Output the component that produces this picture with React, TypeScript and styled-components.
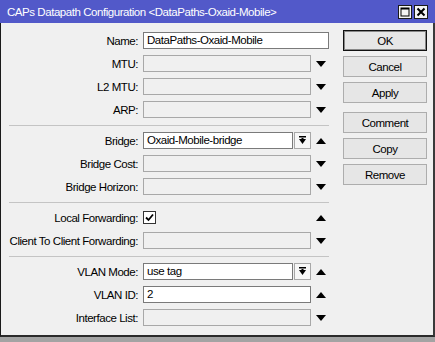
import * as React from 'react'
import styled, { createGlobalStyle } from 'styled-components'

const GlobalStyle = createGlobalStyle`
  html, body {
    margin: 0;
    padding: 0;
    background: #a3a3a3;
  }
  body {
    font-family: "Liberation Sans", Arial, sans-serif;
    font-size: 11.5px;
    letter-spacing: -0.45px;
    color: #000;
  }
`

const Screen = styled.div`
  width: 435px;
  height: 342px;
  overflow: hidden;
  background: #a3a3a3;
`

const Window = styled.div`
  width: 435px;
  height: 337px;
  box-sizing: border-box;
  background: #f0f0f0;
  border-left: 1px solid #1a1a1a;
  border-right: 2px solid #3a3a3a;
  border-bottom: 2px solid #2a2a2a;
  display: flex;
  flex-direction: column;
`

const TitleBar = styled.div`
  height: 23px;
  margin-left: -1px;
  margin-right: -2px;
  background: #5259c9;
  color: #fff;
  display: flex;
  align-items: center;
  justify-content: space-between;
  padding: 0 7px 0 7px;
`

const Title = styled.span`
  font-size: 11.5px;
  white-space: nowrap;
`

const TitleButtons = styled.div`
  display: flex;
  gap: 2px;
`

const TitleButton = styled.div`
  width: 14px;
  height: 14px;
  box-sizing: border-box;
  background: #f4f4f4;
  border: 1px solid #1a1a1a;
  display: flex;
  align-items: center;
  justify-content: center;
`

const Body = styled.div`
  display: flex;
  padding-top: 6px;
`

const Form = styled.div`
  width: 342px;
  display: flex;
  flex-direction: column;
`

const Row = styled.div`
  display: grid;
  grid-template-columns: 142px 168px 20px;
  height: 23px;
  align-items: center;
`

const Label = styled.label`
  text-align: right;
  padding-right: 5px;
  white-space: nowrap;
`

const Field = styled('div')<{ enabled?: boolean; wide?: boolean }>`
  grid-column: ${ props => props.wide ? '2 / span 2' : 'auto' };
  width: ${ props => props.wide ? '186px' : 'auto' };
  height: 17px;
  box-sizing: border-box;
  background: ${ props => props.enabled ? '#fff' : '#f0f0f0' };
  border: 1px solid ${ props => props.enabled ? '#7a7a7a' : '#a8a8a8' };
  padding: 0 3px;
  line-height: 15px;
  white-space: nowrap;
  overflow: hidden;
`

const ComboWrap = styled.div`
  display: flex;
  gap: 1px;
  height: 17px;
`

const ComboInput = styled(Field)`
  flex: 1;
`

const ComboButton = styled.div`
  width: 17px;
  height: 17px;
  box-sizing: border-box;
  background: #f7f7f7;
  border: 1px solid #a8a8a8;
  display: flex;
  align-items: center;
  justify-content: center;
`

const Arrow = styled.div`
  display: flex;
  align-items: center;
  justify-content: center;
`

const Check = styled.div`
  width: 13px;
  height: 13px;
  box-sizing: border-box;
  background: #fff;
  border: 1px solid #333;
  display: flex;
  align-items: center;
  justify-content: center;
`

const Separator = styled.div`
  height: 1px;
  margin: 4px 0 3px 8px;
  width: 320px;
  background: #c4c4c4;
`

const Buttons = styled.div`
  display: flex;
  flex-direction: column;
  gap: 5px;
  padding-top: 1px;
`

const Button = styled('div')<{ primary?: boolean; spaced?: boolean }>`
  width: 84px;
  height: 21px;
  box-sizing: border-box;
  margin-top: ${ props => props.spaced ? '4px' : '0' };
  background: #e6e6e6;
  border: 1px solid ${ props => props.primary ? '#111' : '#adadad' };
  box-shadow: ${ props => props.primary ? 'inset 0 0 0 1px #888' : 'none' };
  display: flex;
  align-items: center;
  justify-content: center;
`

const DownArrow = () => (
  <svg width="10" height="6" viewBox="0 0 10 6">
    <polygon points="0,0 10,0 5,6" fill="#000" />
  </svg>
)

const UpArrow = () => (
  <svg width="10" height="6" viewBox="0 0 10 6">
    <polygon points="0,6 10,6 5,0" fill="#000" />
  </svg>
)

const ComboIcon = () => (
  <svg width="9" height="9" viewBox="0 0 9 9">
    <rect x="1" y="0" width="7" height="1.5" fill="#000" />
    <polygon points="1,3 8,3 4.5,8" fill="#000" />
    <rect x="3.5" y="2" width="2" height="2" fill="#000" />
  </svg>
)

const CheckMark = () => (
  <svg width="9" height="9" viewBox="0 0 9 9">
    <polyline points="1,4.5 3.5,7 8,1.5" fill="none" stroke="#000" strokeWidth="1.8" />
  </svg>
)

interface RowProps {
  label: string
  value?: string
  enabled?: boolean
  arrow?: 'up' | 'down'
  combo?: boolean
}

const FormRow = ({ label, value, enabled, arrow, combo }: RowProps) => (
  <Row>
    <Label>{ label }:</Label>
    {
      combo ? (
        <ComboWrap>
          <ComboInput enabled={ enabled }>{ value }</ComboInput>
          <ComboButton><ComboIcon /></ComboButton>
        </ComboWrap>
      ) : (
        <Field enabled={ enabled }>{ value }</Field>
      )
    }
    <Arrow>{ arrow === 'up' ? <UpArrow /> : <DownArrow /> }</Arrow>
  </Row>
)

export default function App() {
  return (
    <Screen>
      <GlobalStyle />
      <Window>
        <TitleBar>
          <Title>CAPs Datapath Configuration &lt;DataPaths-Oxaid-Mobile&gt;</Title>
          <TitleButtons>
            <TitleButton>
              <svg width="10" height="10" viewBox="0 0 10 10">
                <rect x="1" y="1" width="8" height="8" fill="none" stroke="#000" strokeWidth="1" />
                <rect x="1" y="1" width="8" height="1.5" fill="#000" />
              </svg>
            </TitleButton>
            <TitleButton>
              <svg width="10" height="10" viewBox="0 0 10 10">
                <path d="M1.5 1.5 L8.5 8.5 M8.5 1.5 L1.5 8.5" stroke="#000" strokeWidth="2" />
              </svg>
            </TitleButton>
          </TitleButtons>
        </TitleBar>
        <Body>
          <Form>
            <Row>
              <Label>Name:</Label>
              <Field enabled wide>DataPaths-Oxaid-Mobile</Field>
            </Row>
            <FormRow label="MTU" />
            <FormRow label="L2 MTU" />
            <FormRow label="ARP" />
            <Separator />
            <FormRow label="Bridge" value="Oxaid-Mobile-bridge" enabled combo arrow="up" />
            <FormRow label="Bridge Cost" />
            <FormRow label="Bridge Horizon" />
            <Separator />
            <Row>
              <Label>Local Forwarding:</Label>
              <Check><CheckMark /></Check>
              <Arrow><UpArrow /></Arrow>
            </Row>
            <FormRow label="Client To Client Forwarding" />
            <Separator />
            <FormRow label="VLAN Mode" value="use tag" enabled combo arrow="up" />
            <FormRow label="VLAN ID" value="2" enabled arrow="up" />
            <FormRow label="Interface List" />
          </Form>
          <Buttons>
            <Button primary>OK</Button>
            <Button>Cancel</Button>
            <Button>Apply</Button>
            <Button spaced>Comment</Button>
            <Button>Copy</Button>
            <Button>Remove</Button>
          </Buttons>
        </Body>
      </Window>
    </Screen>
  )
}
